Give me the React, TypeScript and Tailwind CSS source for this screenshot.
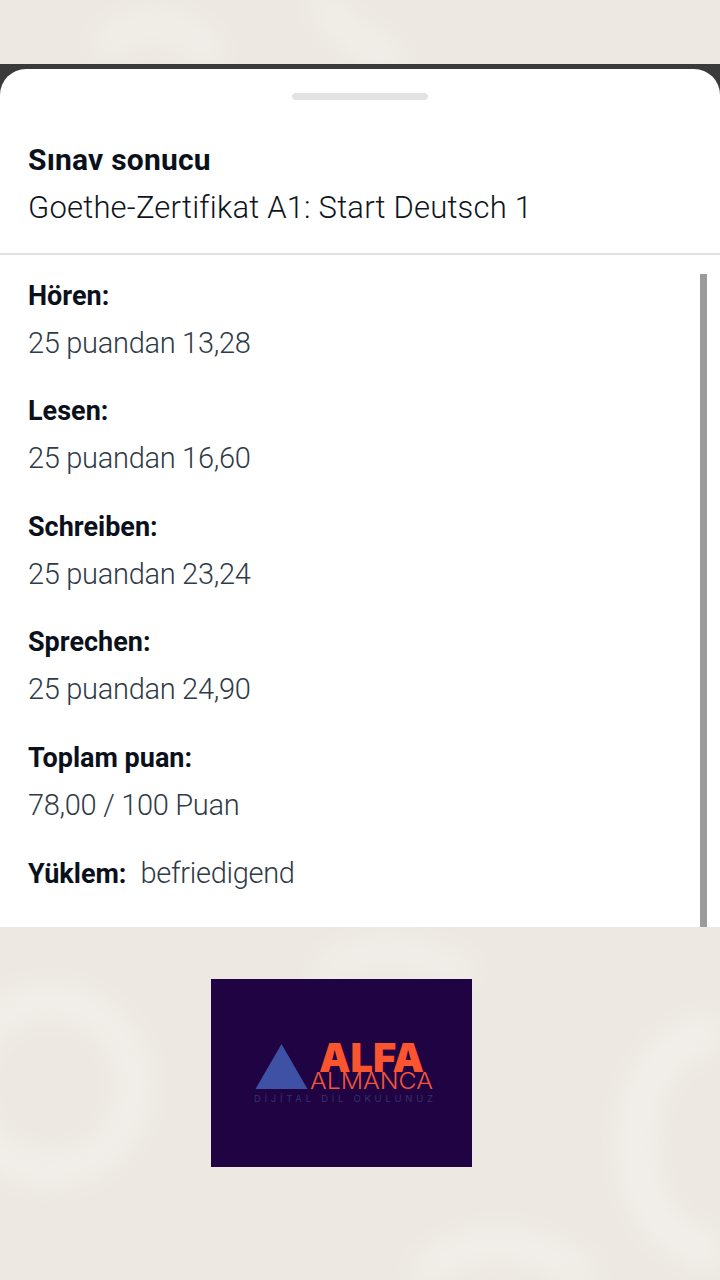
const rows = [
  { label: "Hören:", value: "25 puandan 13,28" },
  { label: "Lesen:", value: "25 puandan 16,60" },
  { label: "Schreiben:", value: "25 puandan 23,24" },
  { label: "Sprechen:", value: "25 puandan 24,90" },
  { label: "Toplam puan:", value: "78,00 / 100 Puan" },
];

function Backdrop() {
  return (
    <svg className="absolute inset-0" width="720" height="1280" viewBox="0 0 720 1280">
      <defs>
        <filter id="soft" x="-30%" y="-30%" width="160%" height="160%">
          <feGaussianBlur stdDeviation="14" />
        </filter>
      </defs>
      <rect width="720" height="1280" fill="#ede8e2" />
      <g fill="none" stroke="#f3f0eb" filter="url(#soft)">
        <circle cx="50" cy="1085" r="85" strokeWidth="26" />
        <path d="M100 50 C130 15 190 15 215 60" strokeWidth="22" />
        <path d="M320 0 C340 30 370 50 400 60" strokeWidth="22" />
        <path d="M720 1030 C650 1040 625 1110 640 1180 C650 1225 690 1250 720 1255" strokeWidth="30" />
        <path d="M420 1280 C450 1240 520 1225 590 1280" strokeWidth="26" />
        <path d="M320 975 C350 945 420 945 470 975" strokeWidth="20" />
      </g>
    </svg>
  );
}

function Logo() {
  return (
    <div className="ml-[211px] flex h-[188px] w-[261px] items-center justify-center bg-[#1f0342]">
      <svg width="261" height="188" viewBox="0 0 261 188">
        <polygon points="44.5,110 96.5,110 70.5,65" fill="#3f51a5" />
        <text x="108" y="93" fontFamily="Inter, sans-serif" fontWeight="900" fontSize="40" textLength="105" lengthAdjust="spacingAndGlyphs" fill="#fb5530">
          ALFA
        </text>
        <text x="99" y="110" fontFamily="Inter, sans-serif" fontWeight="300" fontSize="22.5" textLength="123" lengthAdjust="spacingAndGlyphs" fill="#f0563a">
          ALMANCA
        </text>
        <text x="43" y="123" fontFamily="Inter, sans-serif" fontSize="9.5" textLength="179" fill="#35316e">
          DİJİTAL DİL OKULUNUZ
        </text>
      </svg>
    </div>
  );
}

export default function App() {
  return (
    <div className="relative h-[1280px] w-[720px] overflow-hidden font-['Roboto',sans-serif]">
      <Backdrop />
      <div className="relative flex h-full flex-col">
        <div className="h-16" />
        <div className="bg-[#3a3a3a] pt-[5px]">
          <div className="rounded-t-[26px] bg-white">
            <div className="flex h-[186px] flex-col border-b-2 border-[#e2e2e2] px-7">
              <div className="mx-auto mt-6 h-[7px] w-[136px] rounded-full bg-[#e3e3e3]" />
              <h1 className="mt-[40px] text-[30px] leading-[40px] font-bold tracking-[0.2px] text-[#0b111b]">Sınav sonucu</h1>
              <p className="mt-2 text-[31px] leading-[40px] font-light tracking-[0.2px] text-[#0f151c]">Goethe-Zertifikat A1: Start Deutsch 1</p>
            </div>
            <div className="flex h-[672px] justify-between pl-7 pr-[13px]">
              <div className="pt-[20.5px]">
                {rows.map((row) => (
                  <div key={row.label} className="mb-[28.5px]">
                    <div className="text-[27px] leading-[40px] font-bold text-[#0b111b]">{row.label}</div>
                    <div className="mt-[7px] text-[29px] leading-[40px] font-light tracking-[-0.3px] text-[#2f3b47]">{row.value}</div>
                  </div>
                ))}
                <div className="flex items-baseline gap-[14px] leading-[40px]">
                  <span className="text-[27px] font-bold text-[#0b111b]">Yüklem:</span>
                  <span className="text-[29px] font-light tracking-[-0.3px] text-[#2f3b47]">befriedigend</span>
                </div>
              </div>
              <div className="mt-[19px] w-[7px] bg-[#9b9b9b]" />
            </div>
          </div>
        </div>
        <div className="mt-[52px]">
          <Logo />
        </div>
      </div>
    </div>
  );
}
